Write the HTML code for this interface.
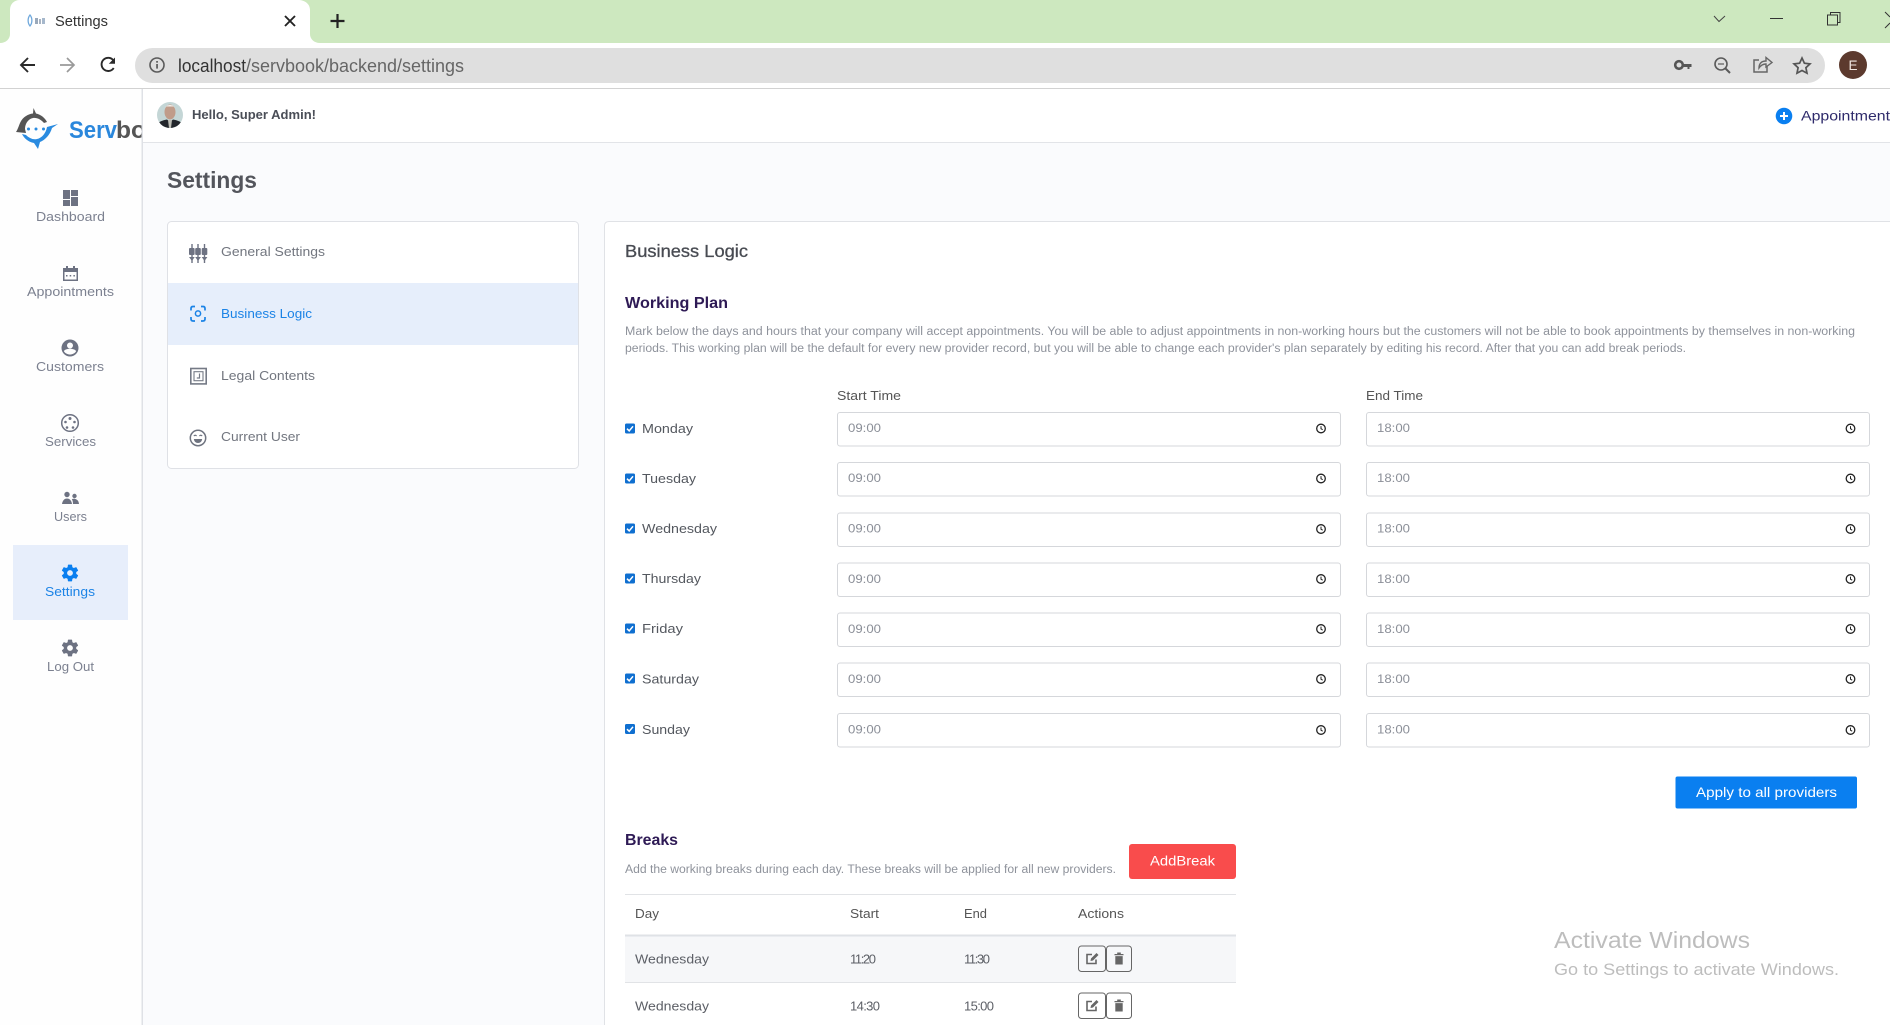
<!DOCTYPE html>
<html lang="en">
<head>
<meta charset="utf-8">
<title>Settings</title>
<style>
html,body{margin:0;padding:0;width:1890px;height:1025px;overflow:hidden;background:#fafbfd}
svg{display:block;position:absolute;left:0;top:0}
text{font-family:"Liberation Sans",sans-serif}
.nav{font-size:13px;fill:#7c8190}
.menu{font-size:13px;fill:#72767f}
.day{font-size:13px;fill:#54585f}
.tm{font-size:12px;fill:#8b8f98}
.th{font-size:13px;fill:#555}
.td{font-size:13px;fill:#5c5f66}
.desc{font-size:11.5px;fill:#8e929b}
.inp{fill:#fff;stroke:#d5d7db;stroke-width:1}
</style>
</head>
<body>
<svg width="1890" height="1025" viewBox="0 0 1890 1025" xmlns="http://www.w3.org/2000/svg">
<defs>
<symbol id="clock" viewBox="0 0 12 12" overflow="visible">
<circle cx="6" cy="6" r="4.3" fill="none" stroke="#222" stroke-width="1.3"/>
<path d="M6 3.6V6.2L7.7 7.2" fill="none" stroke="#222" stroke-width="1"/>
</symbol>
<symbol id="chk" viewBox="0 0 10 10">
<rect width="10" height="10" rx="1.5" fill="#0f6fd0"/>
<path d="M2 5.2L4.2 7.4L8 2.8" fill="none" stroke="#fff" stroke-width="1.5"/>
</symbol>
<symbol id="gear" viewBox="0 0 24 24">
<path fill-rule="evenodd" d="M12,15.5A3.5,3.5 0 0,1 8.5,12A3.5,3.5 0 0,1 12,8.5A3.5,3.5 0 0,1 15.5,12A3.5,3.5 0 0,1 12,15.5M19.43,12.97C19.47,12.65 19.5,12.33 19.5,12C19.5,11.67 19.47,11.34 19.43,11L21.54,9.37C21.73,9.22 21.78,8.95 21.66,8.73L19.66,5.27C19.54,5.05 19.27,4.96 19.05,5.05L16.56,6.05C16.04,5.66 15.5,5.32 14.87,5.07L14.5,2.42C14.46,2.18 14.25,2 14,2H10C9.75,2 9.54,2.18 9.5,2.42L9.13,5.07C8.5,5.32 7.96,5.66 7.44,6.05L4.95,5.05C4.73,4.96 4.46,5.05 4.34,5.27L2.34,8.73C2.21,8.95 2.27,9.22 2.46,9.37L4.57,11C4.53,11.34 4.5,11.67 4.5,12C4.5,12.33 4.53,12.65 4.57,12.97L2.46,14.63C2.27,14.78 2.21,15.05 2.34,15.27L4.34,18.73C4.46,18.95 4.73,19.03 4.95,18.95L7.44,17.94C7.96,18.34 8.5,18.68 9.13,18.93L9.5,21.58C9.54,21.82 9.75,22 10,22H14C14.25,22 14.46,21.82 14.5,21.58L14.87,18.93C15.5,18.67 16.04,18.34 16.56,17.94L19.05,18.95C19.27,19.03 19.54,18.95 19.66,18.73L21.66,15.27C21.78,15.05 21.73,14.78 21.54,14.63L19.43,12.97Z"/>
</symbol>
<symbol id="edit" viewBox="0 0 14 14">
<path d="M11 8V12H2V3H7" fill="none" stroke="#666" stroke-width="1.6"/>
<path d="M5.5 9.5L6 7L11.5 1.5L13.5 3.5L8 9Z" fill="#666"/>
</symbol>
<symbol id="trash" viewBox="0 0 14 14">
<path d="M2.5 2.5H11.5V3.8H2.5ZM5.2 1H8.8V2.5H5.2ZM3.3 4.6H10.7V13H3.3Z" fill="#666"/>
</symbol>
</defs>

<!-- browser chrome -->
<rect x="0" y="0" width="1890" height="43" fill="#cde8bf"/>
<path d="M0 43C6 43 10 39 10 34V10C10 4 14 0 20 0H298C305 0 310 4 310 10V34C310 39 314 43 320 43Z" fill="#fff"/>
<rect x="0" y="43" width="1890" height="45" fill="#fff"/>
<rect x="0" y="88" width="1890" height="1" fill="#d2d2d2"/>
<g transform="translate(26,14)">
<path d="M4 1C1.5 4 1.5 9 4 12C6.5 9 6.5 4 4 1Z" fill="none" stroke="#6fa8dc" stroke-width="1.3"/>
<rect x="9" y="4" width="3" height="6" fill="#9aa9bb"/><rect x="13" y="5" width="2" height="5" fill="#a9b4c2"/><rect x="16" y="4" width="3" height="6" fill="#a6b8cc"/>
</g>
<text x="55" y="26" font-size="14.5" fill="#333" textLength="53" lengthAdjust="spacingAndGlyphs">Settings</text>
<path d="M285 16L295 26M295 16L285 26" stroke="#222" stroke-width="1.9"/>
<path d="M337.5 14V28M330.5 21H344.5" stroke="#222" stroke-width="2.2"/>
<path d="M1714 16L1719 21.5L1725 16" fill="none" stroke="#444" stroke-width="1"/>
<rect x="1770" y="18" width="13" height="1" fill="#333"/>
<path d="M1827.5 15H1837.5V25H1827.5ZM1830.5 15V12.5H1840V22.5H1837.5" fill="none" stroke="#333" stroke-width="1"/>
<path d="M1885 12L1890 17M1885 28L1890 23" fill="none" stroke="#333" stroke-width="1"/>

<path d="M28 58L21 65L28 72M21 65H35" fill="none" stroke="#2a2a2a" stroke-width="1.9"/>
<path d="M67 58L74 65L67 72M74 65H60" fill="none" stroke="#9a9a9a" stroke-width="1.7"/>
<path d="M113.5 60.5A6.6 6.6 0 1 0 113.7 68" fill="none" stroke="#2a2a2a" stroke-width="1.9"/>
<path d="M115 57.5V63.8H108.8Z" fill="#2a2a2a"/>

<rect x="135" y="48" width="1690" height="35" rx="17.5" fill="#dfdfdf"/>
<circle cx="157" cy="65" r="7" fill="none" stroke="#5a5a5a" stroke-width="1.6"/>
<rect x="156.2" y="64" width="1.7" height="4.6" fill="#5a5a5a"/><rect x="156.2" y="61" width="1.7" height="1.7" fill="#5a5a5a"/>
<text x="178" y="72" font-size="18" fill="#333" textLength="68" lengthAdjust="spacingAndGlyphs">localhost</text>
<text x="246" y="72" font-size="18" fill="#666" textLength="218" lengthAdjust="spacingAndGlyphs">/servbook/backend/settings</text>

<circle cx="1679" cy="65" r="3.8" fill="none" stroke="#555" stroke-width="2.6"/>
<path d="M1683 64H1691.5V67H1689.5V69H1687.5V67H1683Z" fill="#555"/>
<circle cx="1721" cy="64" r="6" fill="none" stroke="#5a5a5a" stroke-width="1.6"/>
<path d="M1725.5 68.5L1730 73" stroke="#5a5a5a" stroke-width="2"/>
<rect x="1718" y="63.4" width="6" height="1.2" fill="#5a5a5a"/>
<path d="M1759 60H1754V72H1767V66" fill="none" stroke="#666" stroke-width="1.5"/>
<path d="M1759 68C1759 63 1762 61 1766 61V57.5L1772 62.5L1766 67V64C1763 64 1761 65 1759 68Z" fill="none" stroke="#666" stroke-width="1.4"/>
<path d="M1802 58L1804.4 63.2L1810 63.9L1805.9 67.7L1807 73.2L1802 70.5L1797 73.2L1798.1 67.7L1794 63.9L1799.6 63.2Z" fill="none" stroke="#555" stroke-width="1.7"/>
<circle cx="1853" cy="65" r="14" fill="#5c3a2e"/>
<text x="1853" y="70" font-size="13.5" fill="#f0e6e0" text-anchor="middle">E</text>

<!-- app header & sidebar -->
<rect x="0" y="89" width="1890" height="53" fill="#fff"/>
<rect x="142" y="143" width="1748" height="882" fill="#fafbfd"/>
<rect x="0" y="89" width="142" height="936" fill="#fefefe"/>
<rect x="143" y="142" width="1747" height="1" fill="#e2e4e8"/>
<rect x="141.5" y="89" width="1.5" height="936" fill="#dfe1e6"/>

<!-- logo -->
<path d="M33.5 108L36 113.5C41 114.5 45 118 47 122L44 123C41 119.5 37 117.5 33 118C28 119 25 124 25 129L26 133L16 132C18 129 19 125 20.5 122C23 117 28 114 33 113.5Z" fill="#555"/>
<path d="M58 124L52 128C50 135 45 140 40 142L38 149L34 143C28 142 24 138 22 134L26 135C29 138 33 140 37 139C42 138 46 133 47 127Z" fill="#2a8be0"/>
<circle cx="28.5" cy="129" r="1.5" fill="#2a8be0"/><circle cx="36" cy="129" r="1.5" fill="#2a8be0"/><circle cx="43.5" cy="129" r="1.5" fill="#2a8be0"/>
<svg x="60" y="108" width="81.5" height="40" viewBox="60 108 81.5 40">
<text x="69" y="138" font-size="24" font-weight="bold" fill="#2a87dc" textLength="48" lengthAdjust="spacingAndGlyphs">Serv</text>
<text x="116" y="138" font-size="24" font-weight="bold" fill="#555" textLength="30" lengthAdjust="spacingAndGlyphs">bo</text>
</svg>

<!-- avatar -->
<clipPath id="av"><circle cx="170" cy="115" r="13"/></clipPath>
<g clip-path="url(#av)">
<rect x="157" y="102" width="26" height="26" fill="#c4d6d6"/>
<ellipse cx="170" cy="112" rx="5.5" ry="7.5" fill="#c09c8a"/>
<path d="M165 108C166 104 174 104 175 108L174 106.5H166Z" fill="#efeeea"/>
<path d="M157 128V124C160 121 164 120 167 119.5L170 122L173 119.5C176 120 180 121 183 124V128Z" fill="#22252b"/>
<path d="M168 120L172 120L171 128H169Z" fill="#bdbdb5"/>
</g>
<text x="192" y="119" font-size="13" font-weight="bold" fill="#4a4e57" textLength="124" lengthAdjust="spacingAndGlyphs">Hello, Super Admin!</text>

<circle cx="1784" cy="116" r="8.3" fill="#0a7ff0"/>
<path d="M1784 112V120M1780 116H1788" stroke="#fff" stroke-width="2"/>
<text x="1801" y="120.5" font-size="14" fill="#2e2a6b" textLength="89" lengthAdjust="spacingAndGlyphs">Appointment</text>

<!-- sidebar nav -->
<rect x="13" y="545" width="115" height="75" fill="#e7eefb"/>
<g fill="#6d7282">
<rect x="63" y="190" width="7" height="9"/><rect x="71" y="190" width="7" height="6"/><rect x="63" y="200" width="7" height="6"/><rect x="71" y="197" width="7" height="9"/>
<path d="M63 268H66V266H68V268H73V266H75V268H78V281H63ZM64.5 272V279.5H76.5V272Z" fill-rule="evenodd"/>
<rect x="66" y="275" width="1.5" height="1.5"/><rect x="69.7" y="275" width="1.5" height="1.5"/><rect x="73.4" y="275" width="1.5" height="1.5"/>
<path d="M70 339.5A8.5 8.5 0 1 0 70 356.5A8.5 8.5 0 1 0 70 339.5ZM70 342.5A3 3 0 1 1 70 348.5A3 3 0 1 1 70 342.5ZM70 354.5C67.5 354.5 65.3 353.3 64 351.5C64 349.5 68 348.8 70 348.8C72 348.8 76 349.5 76 351.5C74.7 353.3 72.5 354.5 70 354.5Z" fill-rule="evenodd"/>
<circle cx="70" cy="423" r="8.3" fill="none" stroke="#6d7282" stroke-width="1.5"/>
<circle cx="70" cy="418.5" r="1.5"/><circle cx="65.5" cy="422" r="1.3"/><circle cx="74.5" cy="422" r="1.3"/><circle cx="67" cy="427.5" r="1.3"/><circle cx="73" cy="427.5" r="1.3"/>
<circle cx="67" cy="494.5" r="2.7"/><circle cx="74.5" cy="496" r="2.2"/>
<path d="M62 504C62.5 500 65 498.5 67 498.5C69 498.5 71.5 500 72 504Z"/><path d="M73 504C73 501.5 72.5 500 71.8 499.2C73.5 498.4 78.5 498.3 79 504Z"/>
</g>
<use href="#gear" x="60" y="563" width="20" height="20" fill="#0a7ff0"/>
<use href="#gear" x="60" y="638" width="20" height="20" fill="#6d7282"/>

<text class="nav" x="36" y="221" textLength="69" lengthAdjust="spacingAndGlyphs">Dashboard</text>
<text class="nav" x="27" y="296" textLength="87" lengthAdjust="spacingAndGlyphs">Appointments</text>
<text class="nav" x="36" y="371" textLength="68" lengthAdjust="spacingAndGlyphs">Customers</text>
<text class="nav" x="45" y="446" textLength="51" lengthAdjust="spacingAndGlyphs">Services</text>
<text class="nav" x="54" y="521" textLength="33" lengthAdjust="spacingAndGlyphs">Users</text>
<text class="nav" x="45" y="596" textLength="50" lengthAdjust="spacingAndGlyphs" style="fill:#1b83e6">Settings</text>
<text class="nav" x="47" y="671" textLength="47" lengthAdjust="spacingAndGlyphs">Log Out</text>

<!-- page title -->
<text x="167" y="188" font-size="23" fill="#45484f" font-weight="bold" textLength="90" lengthAdjust="spacingAndGlyphs" opacity=".92">Settings</text>

<!-- settings menu card -->
<rect x="167.5" y="221.5" width="411" height="247" rx="4" fill="#fff" stroke="#dfe1e6"/>
<rect x="168" y="283" width="410" height="62" fill="#e6eefb"/>
<g fill="#6d7282">
<rect x="191.3" y="244" width="1.4" height="19"/><rect x="197.3" y="244" width="1.4" height="19"/><rect x="203.8" y="244" width="1.4" height="19"/>
<rect x="189" y="248" width="5.6" height="7" rx="1"/><rect x="195.2" y="248" width="5.6" height="7" rx="1"/><rect x="201.7" y="248" width="5.6" height="7" rx="1"/>
<path d="M189 257H194.7L192 261ZM195.2 257H200.9L198 261ZM201.7 257H207.4L204.5 261Z"/>
</g>
<path d="M191 310.5V308.5Q191 306.5 193 306.5H195M201 306.5H203Q205 306.5 205 308.5V310.5M205 317V319Q205 321 203 321H201M195 321H193Q191 321 191 319V317" fill="none" stroke="#1b83e6" stroke-width="1.7"/>
<circle cx="198" cy="313.5" r="2.6" fill="none" stroke="#1b83e6" stroke-width="1.5"/>
<rect x="190.8" y="368.5" width="15.4" height="15.4" fill="none" stroke="#757a86" stroke-width="1.6"/>
<rect x="194" y="371.7" width="9" height="9" fill="none" stroke="#757a86" stroke-width="1.1"/>
<path d="M199.5 373.5V378H196.8" fill="none" stroke="#757a86" stroke-width="1.2"/>
<circle cx="198" cy="438" r="7.7" fill="none" stroke="#6f7480" stroke-width="1.5"/>
<path d="M193.8 436Q195.2 434.6 196.6 436M199.4 436Q200.8 434.6 202.2 436" fill="none" stroke="#6f7480" stroke-width="1.2"/>
<path d="M193.8 439H202.2Q201.5 443 198 443Q194.5 443 193.8 439Z" fill="#6f7480"/>

<text class="menu" x="221" y="256" textLength="104" lengthAdjust="spacingAndGlyphs">General Settings</text>
<text class="menu" x="221" y="318" textLength="91" lengthAdjust="spacingAndGlyphs" style="fill:#1b83e6">Business Logic</text>
<text class="menu" x="221" y="380" textLength="94" lengthAdjust="spacingAndGlyphs">Legal Contents</text>
<text class="menu" x="221" y="441" textLength="79" lengthAdjust="spacingAndGlyphs">Current User</text>

<!-- main card -->
<path d="M604.5 1025V226Q604.5 221.5 609 221.5H1890V1025Z" fill="#fff"/>
<path d="M604.5 1025V226Q604.5 221.5 609 221.5H1890" fill="none" stroke="#e0e2e6"/>
<text x="625" y="257" font-size="17.5" fill="#484b52" stroke="#484b52" stroke-width=".3" textLength="123" lengthAdjust="spacingAndGlyphs">Business Logic</text>
<text x="625" y="308" font-size="15.5" font-weight="bold" fill="#2e1a55" textLength="103" lengthAdjust="spacingAndGlyphs">Working Plan</text>
<text class="desc" x="625" y="335" textLength="1230" lengthAdjust="spacingAndGlyphs">Mark below the days and hours that your company will accept appointments. You will be able to adjust appointments in non-working hours but the customers will not be able to book appointments by themselves in non-working</text>
<text class="desc" x="625" y="352" textLength="1061" lengthAdjust="spacingAndGlyphs">periods. This working plan will be the default for every new provider record, but you will be able to change each provider's plan separately by editing his record. After that you can add break periods.</text>

<text class="th" x="837" y="400" textLength="64" lengthAdjust="spacingAndGlyphs">Start Time</text>
<text class="th" x="1366" y="400" textLength="57" lengthAdjust="spacingAndGlyphs">End Time</text>

<!-- Monday -->
<use href="#chk" x="625" y="423.5" width="10" height="10"/>
<text class="day" x="642" y="433" textLength="51" lengthAdjust="spacingAndGlyphs">Monday</text>
<rect class="inp" x="837.5" y="412.5" width="503" height="33.5" rx="2.5"/>
<rect class="inp" x="1366.5" y="412.5" width="503" height="33.5" rx="2.5"/>
<text class="tm" x="848" y="432" textLength="33" lengthAdjust="spacingAndGlyphs">09:00</text>
<text class="tm" x="1377" y="432" textLength="33" lengthAdjust="spacingAndGlyphs">18:00</text>
<use href="#clock" x="1315" y="422.5" width="12" height="12"/>
<use href="#clock" x="1844.5" y="422.5" width="12" height="12"/>

<!-- Tuesday -->
<use href="#chk" x="625" y="473.5" width="10" height="10"/>
<text class="day" x="642" y="483" textLength="54" lengthAdjust="spacingAndGlyphs">Tuesday</text>
<rect class="inp" x="837.5" y="462.5" width="503" height="33.5" rx="2.5"/>
<rect class="inp" x="1366.5" y="462.5" width="503" height="33.5" rx="2.5"/>
<text class="tm" x="848" y="482" textLength="33" lengthAdjust="spacingAndGlyphs">09:00</text>
<text class="tm" x="1377" y="482" textLength="33" lengthAdjust="spacingAndGlyphs">18:00</text>
<use href="#clock" x="1315" y="472.5" width="12" height="12"/>
<use href="#clock" x="1844.5" y="472.5" width="12" height="12"/>

<!-- Wednesday -->
<use href="#chk" x="625" y="523.5" width="10" height="10"/>
<text class="day" x="642" y="533" textLength="75" lengthAdjust="spacingAndGlyphs">Wednesday</text>
<rect class="inp" x="837.5" y="513" width="503" height="33.5" rx="2.5"/>
<rect class="inp" x="1366.5" y="513" width="503" height="33.5" rx="2.5"/>
<text class="tm" x="848" y="532.5" textLength="33" lengthAdjust="spacingAndGlyphs">09:00</text>
<text class="tm" x="1377" y="532.5" textLength="33" lengthAdjust="spacingAndGlyphs">18:00</text>
<use href="#clock" x="1315" y="523" width="12" height="12"/>
<use href="#clock" x="1844.5" y="523" width="12" height="12"/>

<!-- Thursday -->
<use href="#chk" x="625" y="573.5" width="10" height="10"/>
<text class="day" x="642" y="583" textLength="59" lengthAdjust="spacingAndGlyphs">Thursday</text>
<rect class="inp" x="837.5" y="563" width="503" height="33.5" rx="2.5"/>
<rect class="inp" x="1366.5" y="563" width="503" height="33.5" rx="2.5"/>
<text class="tm" x="848" y="583" textLength="33" lengthAdjust="spacingAndGlyphs">09:00</text>
<text class="tm" x="1377" y="583" textLength="33" lengthAdjust="spacingAndGlyphs">18:00</text>
<use href="#clock" x="1315" y="573" width="12" height="12"/>
<use href="#clock" x="1844.5" y="573" width="12" height="12"/>

<!-- Friday -->
<use href="#chk" x="625" y="623.5" width="10" height="10"/>
<text class="day" x="642" y="633" textLength="41" lengthAdjust="spacingAndGlyphs">Friday</text>
<rect class="inp" x="837.5" y="613" width="503" height="33.5" rx="2.5"/>
<rect class="inp" x="1366.5" y="613" width="503" height="33.5" rx="2.5"/>
<text class="tm" x="848" y="633" textLength="33" lengthAdjust="spacingAndGlyphs">09:00</text>
<text class="tm" x="1377" y="633" textLength="33" lengthAdjust="spacingAndGlyphs">18:00</text>
<use href="#clock" x="1315" y="623" width="12" height="12"/>
<use href="#clock" x="1844.5" y="623" width="12" height="12"/>

<!-- Saturday -->
<use href="#chk" x="625" y="673.5" width="10" height="10"/>
<text class="day" x="642" y="683.5" textLength="57" lengthAdjust="spacingAndGlyphs">Saturday</text>
<rect class="inp" x="837.5" y="663" width="503" height="33.5" rx="2.5"/>
<rect class="inp" x="1366.5" y="663" width="503" height="33.5" rx="2.5"/>
<text class="tm" x="848" y="683" textLength="33" lengthAdjust="spacingAndGlyphs">09:00</text>
<text class="tm" x="1377" y="683" textLength="33" lengthAdjust="spacingAndGlyphs">18:00</text>
<use href="#clock" x="1315" y="673" width="12" height="12"/>
<use href="#clock" x="1844.5" y="673" width="12" height="12"/>

<!-- Sunday -->
<use href="#chk" x="625" y="724" width="10" height="10"/>
<text class="day" x="642" y="734" textLength="48" lengthAdjust="spacingAndGlyphs">Sunday</text>
<rect class="inp" x="837.5" y="713.5" width="503" height="33.5" rx="2.5"/>
<rect class="inp" x="1366.5" y="713.5" width="503" height="33.5" rx="2.5"/>
<text class="tm" x="848" y="733.5" textLength="33" lengthAdjust="spacingAndGlyphs">09:00</text>
<text class="tm" x="1377" y="733.5" textLength="33" lengthAdjust="spacingAndGlyphs">18:00</text>
<use href="#clock" x="1315" y="724" width="12" height="12"/>
<use href="#clock" x="1844.5" y="724" width="12" height="12"/>

<!-- apply -->
<rect x="1675.5" y="776.5" width="181.5" height="32" rx="2" fill="#0a7ff0"/>
<text x="1696" y="797" font-size="14" fill="#fff" textLength="141" lengthAdjust="spacingAndGlyphs">Apply to all providers</text>

<!-- breaks -->
<text x="625" y="845" font-size="15.5" font-weight="bold" fill="#2e1a55" textLength="53" lengthAdjust="spacingAndGlyphs">Breaks</text>
<text class="desc" x="625" y="873" textLength="491" lengthAdjust="spacingAndGlyphs">Add the working breaks during each day. These breaks will be applied for all new providers.</text>
<rect x="1129" y="844" width="107" height="35" rx="3" fill="#f94c4c"/>
<text x="1150" y="865.5" font-size="14" fill="#fff" textLength="65" lengthAdjust="spacingAndGlyphs">AddBreak</text>

<rect x="625" y="894" width="611" height="1" fill="#e1e3e6"/>
<text class="th" x="635" y="918" textLength="24" lengthAdjust="spacingAndGlyphs">Day</text>
<text class="th" x="850" y="918" textLength="29" lengthAdjust="spacingAndGlyphs">Start</text>
<text class="th" x="964" y="918" textLength="23" lengthAdjust="spacingAndGlyphs">End</text>
<text class="th" x="1078" y="918" textLength="46" lengthAdjust="spacingAndGlyphs">Actions</text>
<rect x="625" y="936" width="611" height="46" fill="#f6f7f9"/>
<rect x="625" y="934.5" width="611" height="2" fill="#dfe2e6"/>
<rect x="625" y="982" width="611" height="1" fill="#e1e3e6"/>

<text class="td" x="635" y="963.5" textLength="74" lengthAdjust="spacingAndGlyphs">Wednesday</text>
<text class="td" x="850" y="963.5" textLength="26" lengthAdjust="spacing">11:20</text>
<text class="td" x="964" y="963.5" textLength="26" lengthAdjust="spacing">11:30</text>
<rect x="1078.5" y="946" width="27" height="25.5" rx="3" fill="none" stroke="#666"/>
<rect x="1106.5" y="946" width="25" height="25.5" rx="3" fill="none" stroke="#666"/>
<use href="#edit" x="1085" y="951.5" width="14" height="14"/>
<use href="#trash" x="1112" y="951.5" width="14" height="14"/>

<text class="td" x="635" y="1010.5" textLength="74" lengthAdjust="spacingAndGlyphs">Wednesday</text>
<text class="td" x="850" y="1010.5" textLength="30" lengthAdjust="spacing">14:30</text>
<text class="td" x="964" y="1010.5" textLength="30" lengthAdjust="spacing">15:00</text>
<rect x="1078.5" y="993" width="27" height="25.5" rx="3" fill="none" stroke="#666"/>
<rect x="1106.5" y="993" width="25" height="25.5" rx="3" fill="none" stroke="#666"/>
<use href="#edit" x="1085" y="998.5" width="14" height="14"/>
<use href="#trash" x="1112" y="998.5" width="14" height="14"/>

<!-- activate windows -->
<text x="1554" y="948" font-size="23.5" fill="#bdbdbd" textLength="196" lengthAdjust="spacingAndGlyphs">Activate Windows</text>
<text x="1554" y="975" font-size="16.5" fill="#bdbdbd" textLength="285" lengthAdjust="spacingAndGlyphs">Go to Settings to activate Windows.</text>
</svg>
</body>
</html>
